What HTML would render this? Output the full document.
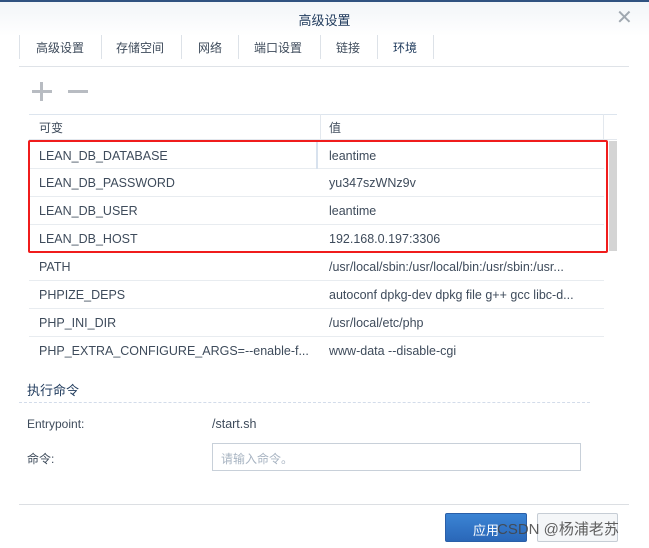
<!DOCTYPE html><html><head><meta charset="utf-8"><style>
*{margin:0;padding:0;box-sizing:border-box}
body{width:649px;height:548px;background:#fff;font-family:"Liberation Sans","Noto Sans CJK SC",sans-serif;font-size:12px;color:#4a5d72;position:relative;overflow:hidden}
.a{position:absolute}
.row{position:absolute;left:29px;width:575px;height:28px;border-bottom:1px solid #e8ecf0}
.row span{position:absolute;top:7px;font-size:12.5px;color:#3e4b5b}
.c1{left:10px}.c2{left:300px}
.sep{position:absolute;top:35px;height:24px;width:1px;background:#dde2e8}
.tab{position:absolute;top:39px;color:#3e4b5b}
</style></head><body>
<div class="a" style="left:0;top:0;width:649px;height:2px;background:#2f5280"></div>
<div class="a" style="left:0;top:2px;width:649px;height:34px;background:linear-gradient(#f2f5f8,#fff)"></div>
<div class="a" style="left:0;top:10px;width:649px;text-align:center;font-size:13px;color:#1f3a5c">高级设置</div>
<div class="a" style="left:616px;top:5px;font-size:20px;color:#a0a8b0">✕</div>
<div class="a" style="left:19px;top:66px;width:610px;height:1px;background:#dfe3e8"></div>
<div class="sep" style="left:19px"></div>
<div class="tab" style="left:36px">高级设置</div>
<div class="sep" style="left:101px"></div>
<div class="tab" style="left:116px">存储空间</div>
<div class="sep" style="left:181px"></div>
<div class="tab" style="left:198px">网络</div>
<div class="sep" style="left:238px"></div>
<div class="tab" style="left:254px">端口设置</div>
<div class="sep" style="left:320px"></div>
<div class="tab" style="left:336px">链接</div>
<div class="sep" style="left:377px"></div>
<div class="tab" style="left:393px;color:#1f3a5c">环境</div>
<div class="sep" style="left:433px"></div>
<div class="a" style="left:32px;top:90px;width:20px;height:3px;background:#b8bcc2"></div>
<div class="a" style="left:40px;top:82px;width:3px;height:19px;background:#b8bcc2"></div>
<div class="a" style="left:68px;top:90px;width:20px;height:3px;background:#b8bcc2"></div>
<div class="a" style="left:29px;top:114px;width:588px;height:1px;background:#dde5ee"></div>
<div class="a" style="left:320px;top:114px;width:1px;height:26px;background:#e3e8ee"></div>
<div class="a" style="left:603px;top:114px;width:1px;height:26px;background:#e3e8ee"></div>
<div class="a" style="left:39px;top:119px;color:#3e4b5b">可变</div>
<div class="a" style="left:329px;top:119px;color:#3e4b5b">值</div>
<div class="a" style="left:29px;top:139px;width:588px;height:1px;background:#e3e8ee"></div>
<div class="a" style="left:609px;top:141px;width:8px;height:110px;background:#d4d4d4"></div>
<div class="row" style="top:141px;background:#fff;border-top:1px solid #dbe4ef"><span class="c1">LEAN_DB_DATABASE</span><span class="c2">leantime</span></div>
<div class="a" style="left:316px;top:142px;width:2px;height:27px;background:#d8e2ee"></div>
<div class="row" style="top:169px"><span class="c1">LEAN_DB_PASSWORD</span><span class="c2">yu347szWNz9v</span></div>
<div class="row" style="top:197px"><span class="c1">LEAN_DB_USER</span><span class="c2">leantime</span></div>
<div class="row" style="top:225px"><span class="c1">LEAN_DB_HOST</span><span class="c2">192.168.0.197:3306</span></div>
<div class="row" style="top:253px"><span class="c1">PATH</span><span class="c2">/usr/local/sbin:/usr/local/bin:/usr/sbin:/usr...</span></div>
<div class="row" style="top:281px"><span class="c1">PHPIZE_DEPS</span><span class="c2">autoconf dpkg-dev dpkg file g++ gcc libc-d...</span></div>
<div class="row" style="top:309px"><span class="c1">PHP_INI_DIR</span><span class="c2">/usr/local/etc/php</span></div>
<div class="row" style="top:337px;border:none"><span class="c1">PHP_EXTRA_CONFIGURE_ARGS=--enable-f...</span><span class="c2">www-data --disable-cgi</span></div>
<div class="a" style="left:28px;top:140px;width:580px;height:113px;border:2px solid #f01c1c;border-radius:2px"></div>
<div class="a" style="left:27px;top:380px;font-size:13px;color:#1f3a5c">执行命令</div>
<div class="a" style="left:19px;top:402px;width:571px;border-top:1px dashed #d3dcea"></div>
<div class="a" style="left:27px;top:417px;color:#3e4b5b">Entrypoint:</div>
<div class="a" style="left:212px;top:417px;color:#3e4b5b;font-size:12.5px">/start.sh</div>
<div class="a" style="left:27px;top:450px;color:#3e4b5b">命令:</div>
<div class="a" style="left:212px;top:443px;width:369px;height:28px;border:1px solid #c8d0d9"></div>
<div class="a" style="left:221px;top:450px;color:#a8b4c2">请输入命令。</div>
<div class="a" style="left:19px;top:504px;width:610px;height:1px;background:#dcdfe3"></div>
<div class="a" style="left:445px;top:513px;width:82px;height:29px;background:linear-gradient(#3b84d4,#2a67b8);border-radius:2px;border:1px solid #2a5fa8"></div>
<div class="a" style="left:537px;top:513px;width:81px;height:29px;background:#f4f6f8;border:1px solid #c6cdd5;border-radius:2px"></div>
<div class="a" style="left:473px;top:520px;color:#fff;font-size:13px">应用</div>
<div class="a" style="left:497px;top:518px;color:#444;font-size:15px;opacity:.85">CSDN @杨浦老苏</div>
</body></html>
